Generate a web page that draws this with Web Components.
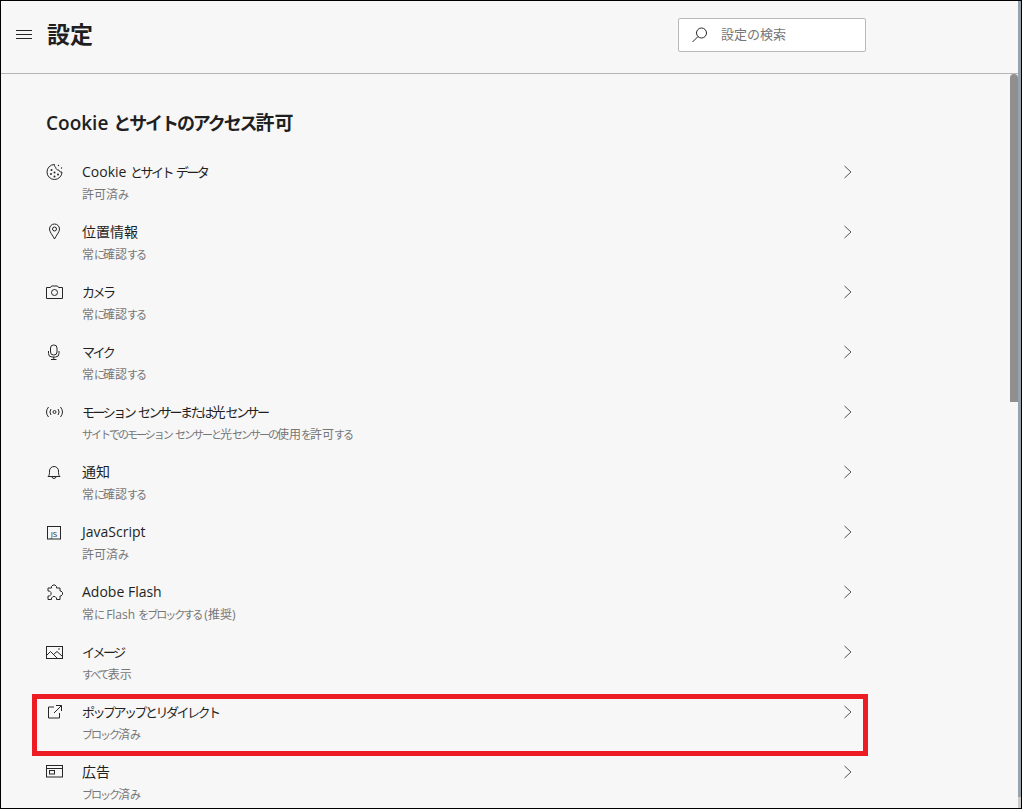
<!DOCTYPE html>
<html lang="ja"><head><meta charset="utf-8">
<style>
html,body{margin:0;padding:0;height:100%;background:#f7f7f7;overflow:hidden}
body{font-family:"Open Sans","Noto Sans CJK JP",sans-serif}
</style></head><body>
<settings-app></settings-app>
<template id="ic-cookie"><svg viewBox="0 0 18 18"><path d="M8.500 1.500a7.500 7.500 0 1 0 7.500 7.500c-1.500.3-3-.5-3.200-2-1.600.2-3-.9-3-2.600-1.200-.6-1.700-1.800-1.300-2.900z"/><g class="f"><circle cx="5.500" cy="7" r="1"/><circle cx="5" cy="11" r="1"/><circle cx="8.500" cy="9.500" r="1"/><circle cx="8.500" cy="13.500" r="1"/><circle cx="12" cy="11.500" r="1"/><circle cx="12.500" cy="2.500" r=".7"/><circle cx="15.500" cy="5" r=".7"/></g></svg></template>
<template id="ic-pin"><svg viewBox="0 0 18 18"><path d="M8.500 16C6.500 12 3.500 9 3.500 6a5 5 0 0 1 10 0c0 3-3 6-5 10z"/><circle cx="8.500" cy="6" r="2"/></svg></template>
<template id="ic-cam"><svg viewBox="0 0 18 18"><path d="M.5 4.500h4l1-1.500h6l1 1.500h4v11h-16z"/><circle cx="8.500" cy="9.500" r="3"/></svg></template>
<template id="ic-mic"><svg viewBox="0 0 18 18"><rect x="4.500" y="2" width="6.500" height="10" rx="3"/><path d="M2.500 8v2.500a3.500 3.500 0 0 0 3.500 3.500h3.500a3.500 3.500 0 0 0 3.500-3.500V8M7.750 14v2.500M5 16.500h5.500"/></svg></template>
<template id="ic-sensor"><svg viewBox="0 0 18 18"><circle cx="8.500" cy="9" r="1.500"/><path d="M5 6a5 5 0 0 0 0 6M12 6a5 5 0 0 1 0 6M2.500 4a8 8 0 0 0 0 10M14.500 4a8 8 0 0 1 0 10"/></svg></template>
<template id="ic-bell"><svg viewBox="0 0 18 18"><path d="M2 13.500c1.500-1 1.500-3 1.500-5.500a4.500 4.500 0 0 1 9 0c0 2.500 0 4.500 1.500 5.500zM6 13.500a2 2 0 0 0 4 0"/></svg></template>
<template id="ic-js"><svg viewBox="0 0 18 18"><rect x="1.500" y="3.500" width="13" height="12.500"/><text x="8" y="14" text-anchor="middle">JS</text></svg></template>
<template id="ic-puzzle"><svg viewBox="0 0 18 18"><path d="M5.500 5V3.500L7 2h2l1.500 1.500V5h3.500v3h1l1.500 1.500v2L15 13h-1v3.500h-3.500V15L9 13.500H7L5.500 15v1.500H2V13h1.500L5 11.500v-2L3.500 8H2V5z"/></svg></template>
<template id="ic-image"><svg viewBox="0 0 18 18"><rect x=".5" y="3.500" width="16" height="12"/><path d="M.5 12.500l4-4 7 7M8 11l3-2.500 5.500 5"/><circle class="f" cx="13" cy="6" r=".8"/></svg></template>
<template id="ic-popup"><svg viewBox="0 0 18 18"><path d="M8 4H2.500v11h11V10M10 2.500h5.500V8M15.500 2.500L8 10"/></svg></template>
<template id="ic-ad"><svg viewBox="0 0 18 18"><rect x=".5" y="2.500" width="16" height="11.500"/><path d="M.5 5.500h16"/><rect x="3.500" y="7.500" width="5" height="3.500"/></svg></template>
<script>
const F='"Open Sans","Noto Sans CJK JP",sans-serif';
const kana=(t)=>t.replace(/[\u3040-\u30ff]+/g,m=>`<span class="k">${m}</span>`);
customElements.define('line-icon',class extends HTMLElement{
  connectedCallback(){
    const s=this.attachShadow({mode:'open'});
    s.innerHTML=`<style>:host{display:block;width:18px;height:18px}
    svg{display:block;width:18px;height:18px;fill:none;stroke:#262626;stroke-width:1;overflow:visible}
    .f,.f circle{fill:#262626;stroke:none}
    text{font:8px ${F};fill:#262626;stroke:none}</style>`;
    s.appendChild(document.getElementById('ic-'+this.getAttribute('name')).content.cloneNode(true));
  }
});
customElements.define('site-row',class extends HTMLElement{
  connectedCallback(){
    const s=this.attachShadow({mode:'open'});
    s.innerHTML=`<style>
    :host{display:flex;height:60px;box-sizing:border-box;padding:9px 0 0 45px;width:852px;color:#1f1f1f}
    line-icon{margin-top:3px;flex:none}
    .t{flex:1;margin-left:18px;min-width:0}
    .a{font-size:14px;line-height:24px;height:24px;white-space:pre}
    .a .k{font-size:13px;letter-spacing:-2.500px}
    .b{font-size:12px;line-height:20px;color:#767676;white-space:pre;margin-top:1px}
    .b .k{font-size:11px;letter-spacing:-2px}
    svg{flex:none;width:10px;height:14px;margin:5px 0 0 0;fill:none;stroke:#555;stroke-width:1}
    </style><line-icon name="${this.getAttribute('icon')}"></line-icon>
    <div class="t"><div class="a">${kana(this.getAttribute('label'))}</div><div class="b">${kana(this.getAttribute('sub'))}</div></div>
    <svg viewBox="0 0 10 14"><path d="M1.500 1l6.500 6-6.500 6"/></svg>`;
  }
});
customElements.define('settings-header',class extends HTMLElement{
  connectedCallback(){
    const s=this.attachShadow({mode:'open'});
    s.innerHTML=`<style>
    :host{display:flex;align-items:center;height:73px;box-sizing:border-box;border-bottom:1px solid #b4b4b4;flex:none;color:#1f1f1f}
    .m{width:16px;height:9px;margin-left:15px;margin-top:-5px;box-sizing:border-box;border-top:1px solid #262626;border-bottom:1px solid #262626;background:linear-gradient(#262626,#262626) 0 3px/100% 1px no-repeat}
    h1{font:600 23px/32px ${F};margin:-7px 0 0 15px;flex:1}
    .s{width:188px;height:34px;box-sizing:border-box;border:1px solid #b9b9b9;border-radius:2px;background:#fff;margin-right:152px;margin-top:-5px;display:flex;align-items:center;padding-left:12px}
    svg{width:18px;height:18px;fill:none;stroke:#262626;stroke-width:1;flex:none}
    span{font-size:13px;color:#767676;margin-left:12px;margin-top:-3px}
    </style><div class="m"></div><h1>設定</h1>
    <div class="s"><svg viewBox="0 0 18 18"><circle cx="10.500" cy="7" r="5"/><path d="M7 10.500L1.500 16"/></svg><span>設定の検索</span></div>`;
  }
});
customElements.define('settings-app',class extends HTMLElement{
  connectedCallback(){
    const s=this.attachShadow({mode:'open'});
    const rows=[
     ['cookie','Cookie とサイト データ','許可済み'],['pin','位置情報','常に確認する'],['cam','カメラ','常に確認する'],['mic','マイク','常に確認する'],
     ['sensor','モーション センサーまたは光センサー','サイトでのモーション センサーと光センサーの使用を許可する'],['bell','通知','常に確認する'],['js','JavaScript','許可済み'],
     ['puzzle','Adobe Flash','常に Flash をブロックする (推奨)'],['image','イメージ','すべて表示'],['popup','ポップアップとリダイレクト','ブロック済み'],['ad','広告','ブロック済み']];
    s.innerHTML=`<style>
    :host{display:flex;width:1022px;height:809px;box-sizing:border-box;border:solid #000;border-width:1px;background:#f7f7f7;font-family:${F};overflow:hidden}
    .col{flex:1;min-width:0;display:flex;flex-direction:column}
    .strip{width:3px;flex:none;background:linear-gradient(#98a2ac 0 796px,#c9c9c9 796px)}
    .body{flex:1;display:flex;min-height:0;overflow:hidden}
    .main{flex:1;padding-top:35px}
    h2{font:600 19px/28px ${F};margin:0 0 14px 45px;color:#1f1f1f}
    h2 .k{font-size:18px;letter-spacing:-2.100px}
    .rows{position:relative}
    .box{position:absolute;left:31px;top:543px;width:836px;height:62px;box-sizing:border-box;border:5px solid #ed1c24}
    .thumb{width:8px;height:328px;flex:none;background:#8f8f8f;border-radius:4px 4px 0 0}
    </style><div class="col"><settings-header></settings-header>
    <div class="body"><div class="main"><h2>${kana('Cookie とサイトのアクセス許可')}</h2><div class="rows">
    ${rows.map(r=>`<site-row icon="${r[0]}" label="${r[1]}" sub="${r[2]}"></site-row>`).join('')}
    <div class="box"></div></div></div>
    <div class="thumb"></div></div></div><div class="strip"></div>`;
  }
});
</script>
</body></html>
